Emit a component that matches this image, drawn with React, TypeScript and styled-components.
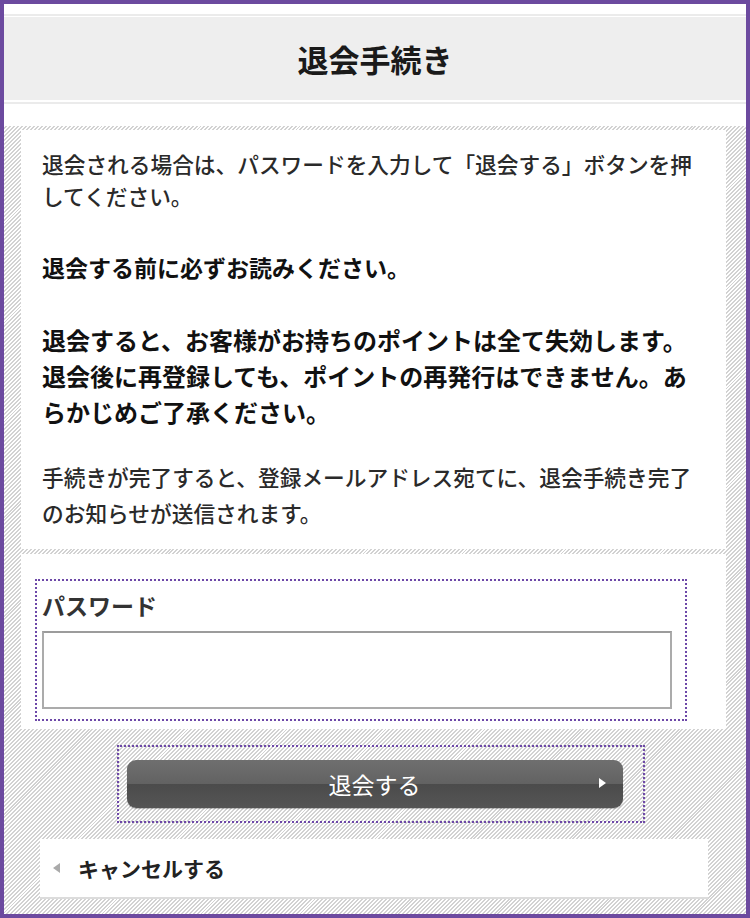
import React from 'react';
import styled, { createGlobalStyle } from 'styled-components';

const GlobalStyle = createGlobalStyle`
  html, body {
    margin: 0;
    padding: 0;
    background: #fff;
  }
  body {
    font-family: "Noto Sans CJK JP", "Noto Sans", sans-serif;
    color: #333;
  }
`;

const hatch = `repeating-linear-gradient(135deg, #fff 0, #fff 1.4px, #d2d2d2 1.4px, #d2d2d2 2.8px)`;

const Frame = styled.div`
  box-sizing: border-box;
  width: 750px;
  height: 918px;
  border: 4px solid #6c4a9f;
  display: flex;
  flex-direction: column;
  background: #fff;
  overflow: hidden;
`;

const HeaderWrap = styled.header`
  padding: 10px 0 22px;
  background: #fff;
`;

const HeaderRule = styled.div`
  border-top: 2px solid #ebebeb;
  border-bottom: 2px solid #ebebeb;
  padding: 1px 0 2px;
`;

const Title = styled.h1`
  margin: 0;
  height: 83px;
  background: #eeeeee;
  display: flex;
  align-items: center;
  justify-content: center;
  font-size: 31px;
  font-weight: 700;
  color: #1a1a1a;
`;

const Body = styled.main`
  flex: 1;
  background: ${hatch};
  padding: 4px 20px 0 17px;
  display: flex;
  flex-direction: column;
`;

const Panel = styled.section<{ $pad: string; $gap?: number }>`
  background: #fff;
  padding: ${(p) => p.$pad};
  margin-bottom: ${(p) => p.$gap ?? 0}px;
`;

const Text = styled.p<{ $size: number; $lh: number; $bold?: boolean; $mb?: number }>`
  margin: 0 0 ${(p) => p.$mb ?? 0}px;
  font-size: ${(p) => p.$size}px;
  line-height: ${(p) => p.$lh}px;
  font-weight: ${(p) => (p.$bold ? 700 : 500)};
  color: ${(p) => (p.$bold ? '#111' : '#2a2a2a')};
`;

const Field = styled.div`
  border: 2px dotted #6d48a8;
  margin-right: 39px;
  padding: 8px 13px 10px 5px;
`;

const Label = styled.label`
  display: block;
  font-size: 23px;
  font-weight: 700;
  color: #333;
  line-height: 32px;
  margin-bottom: 10px;
`;

const Input = styled.input`
  box-sizing: border-box;
  display: block;
  width: 100%;
  height: 78px;
  border: 2px solid #ababab;
  border-top-color: #9c9c9c;
  background: #fff;
  outline: none;
`;

const ButtonZone = styled.div`
  display: flex;
  justify-content: center;
  padding: 16px 0 16px;
`;

const ButtonOutline = styled.div`
  border: 2px dotted #6d48a8;
  padding: 13px 20px 13px 8px;
  margin-left: 14px;
`;

const SubmitButton = styled.button`
  position: relative;
  width: 496px;
  height: 48px;
  border: none;
  border-radius: 9px;
  background: linear-gradient(
    to bottom,
    #6f6f6f 0%,
    #626262 50%,
    #4b4b4b 50%,
    #555 100%
  );
  color: #fff;
  font-family: inherit;
  font-size: 23px;
  font-weight: 400;
  cursor: pointer;
  box-shadow: 0 1px 1px rgba(0, 0, 0, 0.25);
`;

const Arrow = styled.span<{ $dir: 'left' | 'right'; $color: string }>`
  width: 0;
  height: 0;
  border-top: 5px solid transparent;
  border-bottom: 5px solid transparent;
  ${(p) =>
    p.$dir === 'right'
      ? `border-left: 7px solid ${p.$color};`
      : `border-right: 7px solid ${p.$color};`}
`;

const ButtonArrow = styled.span`
  position: absolute;
  right: 17px;
  top: 50%;
  transform: translateY(-60%);
  display: flex;
`;

const CancelLink = styled.a`
  margin: 0 0 0 19px;
  width: 668px;
  height: 60px;
  box-sizing: border-box;
  background: #fff;
  border-bottom: 2px solid #dcdcdc;
  display: flex;
  align-items: center;
  gap: 18px;
  padding-left: 13px;
  font-size: 21px;
  font-weight: 700;
  color: #222;
  text-decoration: none;
`;

const App = () => {
  return (
    <>
      <GlobalStyle />
      <Frame>
        <HeaderWrap>
          <HeaderRule>
            <Title>退会手続き</Title>
          </HeaderRule>
        </HeaderWrap>
        <Body>
          <Panel $pad="18px 21px 18px 21px" $gap={5}>
            <Text $size={21.7} $lh={32} $mb={37}>
              退会される場合は、パスワードを入力して「退会する」ボタンを押してください。
            </Text>
            <Text $size={23} $lh={36} $bold $mb={37}>
              退会する前に必ずお読みください。
            </Text>
            <Text $size={24} $lh={36} $bold $mb={29}>
              退会すると、お客様がお持ちのポイントは全て失効します。退会後に再登録しても、ポイントの再発行はできません。あらかじめご了承ください。
            </Text>
            <Text $size={21.7} $lh={36}>
              手続きが完了すると、登録メールアドレス宛てに、退会手続き完了のお知らせが送信されます。
            </Text>
          </Panel>
          <Panel $pad="25px 0 8px 14px">
            <Field>
              <Label htmlFor="password">パスワード</Label>
              <Input id="password" type="password" />
            </Field>
          </Panel>
          <ButtonZone>
            <ButtonOutline>
              <SubmitButton type="button">
                退会する
                <ButtonArrow>
                  <Arrow $dir="right" $color="#fff" />
                </ButtonArrow>
              </SubmitButton>
            </ButtonOutline>
          </ButtonZone>
          <CancelLink href="#">
            <Arrow $dir="left" $color="#aaa" />
            キャンセルする
          </CancelLink>
        </Body>
      </Frame>
    </>
  );
};

export default App;
